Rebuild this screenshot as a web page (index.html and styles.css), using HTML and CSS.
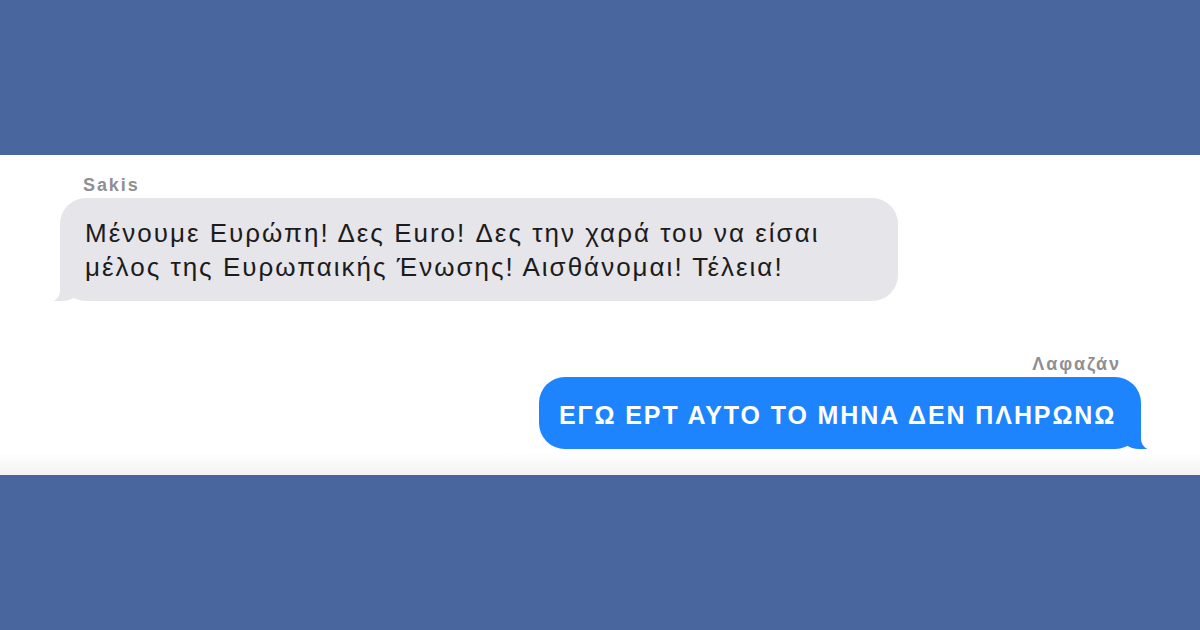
FILE: index.html
```html
<!DOCTYPE html>
<html lang="el">
<head>
    <meta charset="UTF-8">
    <title>Sakis - Λαφαζάν</title>
    <link rel="stylesheet" href="styles.css">
</head>
<body>
    <div class="band"></div>
    <div class="chat">
        <div class="msg left">
            <div class="name">Sakis</div>
            <div class="bubble grey">Μένουμε Ευρώπη! Δες Euro! Δες την χαρά του να είσαι<br>μέλος της Ευρωπαικής Ένωσης! Αισθάνομαι! Τέλεια!</div>
        </div>
        <div class="msg right">
            <div class="name">Λαφαζάν</div>
            <div class="bubble blue">ΕΓΩ ΕΡΤ ΑΥΤΟ ΤΟ ΜΗΝΑ ΔΕΝ ΠΛΗΡΩΝΩ</div>
        </div>
    </div>
    <div class="band"></div>
</body>
</html>
```
FILE: styles.css
```css
*{margin:0;padding:0;box-sizing:border-box;font-family:"Liberation Sans",Arial,sans-serif;}

body{background:#4a669f;width:1200px;height:630px;overflow:hidden;}

.band{height:155px;background:#4a669f;}

.chat{
    height:320px;
    background:linear-gradient(#fff 93%,#f3f3f4);
    padding:20px 55px 0 60px;
    display:flex;
    flex-direction:column;
}

.msg{display:flex;flex-direction:column;}
.msg.left{align-items:flex-start;}
.msg.right{align-items:flex-end;margin-top:53px;}

.name{font-size:18px;font-weight:bold;color:#8f8f94;letter-spacing:1.9px;line-height:20px;}
.left .name{margin-left:23px;margin-bottom:3px;}
.right .name{margin-right:24px;margin-bottom:3px;}

.bubble{position:relative;}

.grey{
    background:#e5e5ea;color:#1c1c1c;
    width:838px;height:103px;
    border-radius:26px;
    padding:18px 25px;
    font-size:26px;
    letter-spacing:2px;
    line-height:34px;
}

.blue{
    background:#1d84fd;color:#fff;
    width:602px;height:72px;
    border-radius:26px;
    padding:0 20px;
    font-size:25px;
    font-weight:bold;
    letter-spacing:1.9px;
    line-height:76px;
    margin-right:4px;
}

.grey::before{
    content:"";position:absolute;left:-8px;bottom:0;
    width:28px;height:26px;
    background:#e5e5ea;
    border-bottom-right-radius:18px 14px;
}
.grey::after{
    content:"";position:absolute;left:-22px;bottom:-2px;
    width:22px;height:28px;
    background:#fff;
    border-bottom-right-radius:14px 12px;
}

.blue::before{
    content:"";position:absolute;right:-8px;bottom:0;
    width:28px;height:26px;
    background:#1d84fd;
    border-bottom-left-radius:18px 14px;
}
.blue::after{
    content:"";position:absolute;right:-22px;bottom:-2px;
    width:22px;height:28px;
    background:#fff;
    border-bottom-left-radius:14px 12px;
}
```
